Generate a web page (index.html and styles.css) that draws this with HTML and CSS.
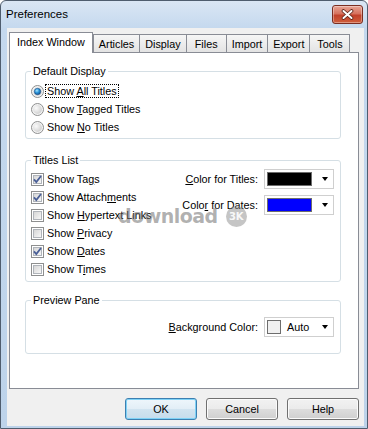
FILE: index.html
```html
<!DOCTYPE html>
<html lang="en">
	<head>
		<title>Preferences</title>
		<link rel="stylesheet" href="styles.css">
	</head>
	<body>
<!-- shared pieces for the check boxes and radio buttons !-->
		<svg class="defs" width="0" height="0">
			<defs>
				<linearGradient id="chkIn" x1="0" y1="0" x2="1" y2="1">
					<stop offset="0" stop-color="#d4d4d4"/>
					<stop offset="1" stop-color="#f9f9f9"/>
				</linearGradient>
				<radialGradient id="radIn" cx="0.35" cy="0.35" r="0.75">
					<stop offset="0" stop-color="#fbfbfb"/>
					<stop offset="1" stop-color="#cdcdcd"/>
				</radialGradient>
				<radialGradient id="radDot" cx="0.4" cy="0.35" r="0.7">
					<stop offset="0" stop-color="#a8e6ff"/>
					<stop offset="0.5" stop-color="#2a93d8"/>
					<stop offset="1" stop-color="#12508f"/>
				</radialGradient>
				<symbol id="chk" viewBox="0 0 13 13">
					<rect x="0.5" y="0.5" width="12" height="12" fill="#fff" stroke="#8e8f8f"/>
					<rect x="2.5" y="2.5" width="8" height="8" fill="url(#chkIn)" stroke="#b0b4ba"/>
				</symbol>
				<symbol id="tick" viewBox="0 0 13 13">
					<path d="M3 6.3 L5.3 9 L10 3" fill="none" stroke="#4a5f97" stroke-width="1.8"/>
				</symbol>
				<symbol id="rad" viewBox="0 0 13 13">
					<circle cx="6.5" cy="6.5" r="6" fill="#f3f3f3" stroke="#8e8f8f"/>
					<circle cx="6.5" cy="6.5" r="4.4" fill="url(#radIn)"/>
				</symbol>
				<symbol id="dot" viewBox="0 0 13 13">
					<circle cx="6.5" cy="6.5" r="3.2" fill="url(#radDot)" stroke="#1b4e84" stroke-width="0.6"/>
				</symbol>
			</defs>
		</svg>

		<div class="window">
			<div class="titlebar">
				<span class="title">Preferences</span>
				<span class="close">
					<svg width="13" height="11" viewBox="0 0 13 11">
						<path d="M2.5 2 L10.5 9 M10.5 2 L2.5 9" stroke="#5a2519" stroke-width="3.6" stroke-linecap="round"/>
						<path d="M2.5 2 L10.5 9 M10.5 2 L2.5 9" stroke="#fff" stroke-width="2" stroke-linecap="round"/>
					</svg>
				</span>
			</div>

			<div class="client">
				<div class="tabs">
					<span class="tab tab-active">Index Window</span>
					<span class="tab">Articles</span>
					<span class="tab">Display</span>
					<span class="tab">Files</span>
					<span class="tab">Import</span>
					<span class="tab">Export</span>
					<span class="tab">Tools</span>
				</div>

				<div class="panel">
					<fieldset class="group group-display">
						<legend>Default Display</legend>
						<div class="option">
							<svg class="mark"><use href="#rad"/><use href="#dot"/></svg>
							<span class="label focus">Show <u>A</u>ll Titles</span>
						</div>
						<div class="option">
							<svg class="mark"><use href="#rad"/></svg>
							<span class="label">Show <u>T</u>agged Titles</span>
						</div>
						<div class="option">
							<svg class="mark"><use href="#rad"/></svg>
							<span class="label">Show <u>N</u>o Titles</span>
						</div>
					</fieldset>

					<fieldset class="group group-titles">
						<legend>Titles List</legend>
						<div class="titles-cols">
							<div class="checks">
								<div class="option">
									<svg class="mark"><use href="#chk"/><use href="#tick"/></svg>
									<span class="label">Show Ta<u>g</u>s</span>
								</div>
								<div class="option">
									<svg class="mark"><use href="#chk"/><use href="#tick"/></svg>
									<span class="label">Show Attach<u>m</u>ents</span>
								</div>
								<div class="option">
									<svg class="mark"><use href="#chk"/></svg>
									<span class="label">Show <u>H</u>ypertext Links</span>
								</div>
								<div class="option">
									<svg class="mark"><use href="#chk"/></svg>
									<span class="label">Show <u>P</u>rivacy</span>
								</div>
								<div class="option">
									<svg class="mark"><use href="#chk"/><use href="#tick"/></svg>
									<span class="label">Show <u>D</u>ates</span>
								</div>
								<div class="option">
									<svg class="mark"><use href="#chk"/></svg>
									<span class="label">Show T<u>i</u>mes</span>
								</div>
							</div>
							<div class="colors">
								<div class="color-row">
									<span><u>C</u>olor for Titles:</span>
									<span class="combo"><span class="swatch swatch-black"></span><span class="arrow"></span></span>
								</div>
								<div class="color-row">
									<span>Colo<u>r</u> for Dates:</span>
									<span class="combo"><span class="swatch swatch-blue"></span><span class="arrow"></span></span>
								</div>
							</div>
						</div>
					</fieldset>

					<fieldset class="group group-preview">
						<legend>Preview Pane</legend>
						<div class="color-row">
							<span><u>B</u>ackground Color:</span>
							<span class="combo"><span class="swatch swatch-auto"></span><span class="auto">Auto</span><span class="arrow"></span></span>
						</div>
					</fieldset>

					<div class="watermark">download<span class="wm-logo">3K</span></div>
				</div>

				<div class="buttons">
					<button class="btn btn-default">OK</button>
					<button class="btn">Cancel</button>
					<button class="btn">Help</button>
				</div>
			</div>
		</div>
	</body>
</html>
```

FILE: styles.css
```css
body {
	margin: 0;
	font-family: "Liberation Sans", Arial, sans-serif;
	font-size: 10.8px;
	color: #000;
	background: #fff;
}
.defs {
	position: absolute;
	width: 0;
	height: 0;
}
.window {
	box-sizing: border-box;
	width: 368px;
	height: 429px;
	border: 1px solid #4f5d6e;
	border-radius: 6px 6px 0 0;
	background: linear-gradient(#dae6f4 0, #c4d8ee 28px, #bdd3ea 100%);
	display: flex;
	flex-direction: column;
}
.titlebar {
	height: 27px;
	display: flex;
	align-items: flex-start;
	justify-content: space-between;
	padding: 0 4px 0 5px;
}
.title {
	font-size: 11.5px;
	line-height: 13px;
	margin-top: 7px;
}
.close {
	box-sizing: border-box;
	width: 31px;
	height: 19px;
	margin-top: 4px;
	border: 1px solid #7a2e22;
	border-radius: 3px;
	background: linear-gradient(#e8a596 0, #d6725e 45%, #c2412b 55%, #cf5f3c 100%);
	box-shadow: inset 0 0 0 1px rgba(255, 255, 255, 0.35);
	display: flex;
	align-items: center;
	justify-content: center;
}
.client {
	flex: 1;
	margin: 0 3px 2px 6px;
	padding: 4px 5px 6px 2px;
	background: #f0f0f0;
	display: flex;
	flex-direction: column;
}

/* tabs */
.tabs {
	display: flex;
	align-items: flex-end;
	height: 21px;
	margin-bottom: -1px;
}
.tab {
	box-sizing: border-box;
	height: 19px;
	min-width: 41px;
	padding: 0 5px 1px;
	margin-left: -1px;
	border: 1px solid #898c95;
	border-bottom: none;
	background: linear-gradient(#f6f6f6, #e2e2e2);
	display: flex;
	align-items: center;
	justify-content: center;
}
.tab-active {
	height: 21px;
	padding: 0 7px 2px;
	margin-left: 0;
	margin-right: 1px;
	background: #fff;
	position: relative;
	z-index: 1;
}
.panel {
	flex: 1;
	position: relative;
	background: #fff;
	border: 1px solid #898c95;
	padding: 12px 17px 0 15px;
}

/* group boxes */
.group {
	margin: 0;
	min-width: 0;
	border: 1px solid #d5dfe5;
	border-radius: 3px;
}
.group legend {
	padding: 0 2px;
	line-height: 13px;
}
.group-display {
	padding: 4px 6px 2px 5px;
}
.group-titles {
	margin-top: 15px;
	padding: 3px 6px 3px 5px;
}
.group-preview {
	margin-top: 12px;
	padding: 10px 6px 16px 5px;
}
.option {
	display: flex;
	align-items: center;
	height: 18px;
}
.mark {
	width: 13px;
	height: 13px;
	flex: none;
}
.label {
	margin-left: 2px;
	padding: 0 1px;
	line-height: 12px;
}
.focus {
	outline: 1px dotted #000;
}
.titles-cols {
	display: flex;
	justify-content: space-between;
}
.colors {
	display: flex;
	flex-direction: column;
	gap: 6px;
	margin-top: -1px;
}
.color-row {
	display: flex;
	align-items: center;
	justify-content: flex-end;
}
.combo {
	box-sizing: border-box;
	width: 70px;
	height: 20px;
	margin-left: 6px;
	padding: 0 5px 0 2px;
	border: 1px solid #cfcfcf;
	background: #fff;
	display: flex;
	align-items: center;
}
.swatch {
	box-sizing: border-box;
	width: 45px;
	height: 14px;
	border: 1px solid #6d6d6d;
}
.swatch-black {
	background: #000;
}
.swatch-blue {
	background: #0000ff;
}
.swatch-auto {
	width: 14px;
	background: #f0f0f0;
}
.auto {
	margin-left: 6px;
}
.arrow {
	margin-left: auto;
	width: 0;
	height: 0;
	border-left: 3px solid transparent;
	border-right: 3px solid transparent;
	border-top: 4px solid #000;
}

/* download3k stamp over the panel */
.watermark {
	position: absolute;
	left: 108px;
	top: 152px;
	display: flex;
	align-items: center;
	font-family: "DejaVu Sans", sans-serif;
	font-weight: bold;
	font-size: 19px;
	letter-spacing: -0.5px;
	color: rgba(110, 110, 110, 0.55);
	pointer-events: none;
}
.wm-logo {
	width: 21px;
	height: 21px;
	margin-left: 8px;
	border-radius: 50%;
	background: rgba(140, 140, 140, 0.5);
	color: rgba(255, 255, 255, 0.9);
	font-size: 10px;
	letter-spacing: 0;
	display: flex;
	align-items: center;
	justify-content: center;
}

/* buttons */
.buttons {
	display: flex;
	justify-content: flex-end;
	gap: 9px;
	margin-top: 9px;
}
.btn {
	box-sizing: border-box;
	width: 72px;
	height: 22px;
	padding: 0;
	font-family: inherit;
	font-size: 10.8px;
	color: #000;
	border: 1px solid #707070;
	border-radius: 3px;
	background: linear-gradient(#f2f2f2 0, #ebebeb 50%, #dddddd 50%, #cfcfcf 100%);
	box-shadow: inset 0 0 0 1px #fbfbfb;
}
.btn-default {
	border-color: #3c7fb1;
	background: linear-gradient(#eef6fb 0, #e2eef6 50%, #d2e4f0 50%, #c6dcec 100%);
	box-shadow: inset 0 0 0 1px #7fd2f6;
}
```
